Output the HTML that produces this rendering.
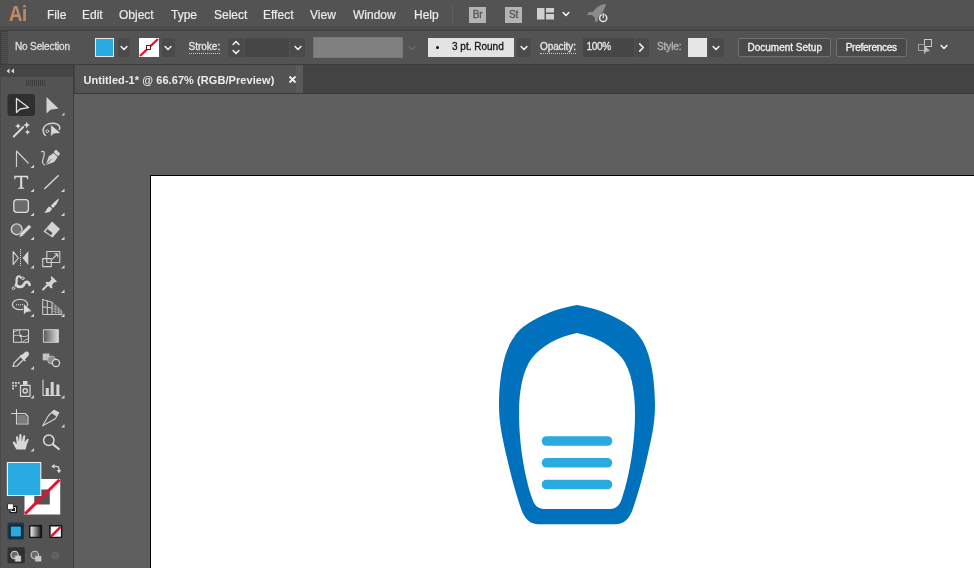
<!DOCTYPE html>
<html><head><meta charset="utf-8">
<style>
*{box-sizing:border-box;margin:0;padding:0}
html,body{width:974px;height:568px;overflow:hidden;background:#5f5f5f;font-family:"Liberation Sans",sans-serif;}
#root{will-change:transform;position:relative;width:974px;height:568px;overflow:hidden;background:#5f5f5f}
.abs{position:absolute}
#menubar{left:0;top:0;width:974px;height:30px;background:#535353}
#menubar span{position:absolute;top:7px;font-size:12px;color:#ececec;-webkit-text-stroke:0.2px currentColor;line-height:16px;white-space:nowrap}
#ctrl{left:0;top:30px;width:974px;height:35px;background:#535353;border-top:1px solid #3f3f3f;border-bottom:1px solid #3c3c3c}
#ctrl .t{position:absolute;font-size:11px;color:#dcdcdc;line-height:14px;white-space:nowrap;top:9px;letter-spacing:-0.3px}
.dd{position:absolute;background:#4a4a4a;border-radius:2px}
#tabbar{left:74px;top:65px;width:900px;height:29px;background:#434343;border-bottom:1px solid #3a3a3a}
#tab{left:75px;top:65px;width:228px;height:28px;background:linear-gradient(to right,#535353 0,#535353 221px,#5a5a5a 221px,#5a5a5a 228px)}
#tab span{position:absolute;left:8.4px;top:8px;letter-spacing:0.07px;font-size:11px;font-weight:bold;color:#ececec;white-space:nowrap;line-height:14px}
#tools{left:0;top:65px;width:74px;height:503px;background:#535353;border-right:1px solid #3c3c3c;border-left:1px solid #494949}
#toolhdr{left:0;top:65px;width:73px;height:12px;background:#454545}
#paste{left:75px;top:94px;width:899px;height:474px;background:#5f5f5f}
#art{left:150px;top:175px;width:830px;height:400px;background:#fff;border:1px solid #000}
.t10{font-size:10px;line-height:12px;white-space:nowrap;-webkit-text-stroke:0.3px currentColor}
.btn{background:#4a4a4a;border:1px solid #707070;border-radius:2px}
.btn span{position:absolute;top:2.5px;font-size:10px;line-height:12px;color:#f2f2f2;white-space:nowrap;-webkit-text-stroke:0.3px currentColor}
.ib{width:17px;height:16px;background:#b4b4b4;color:#555;font-size:10px;font-weight:normal;-webkit-text-stroke:0.3px #555;line-height:16px;text-align:center;letter-spacing:-0.3px}
</style></head><body><div id="root">
<div class="abs" id="paste"></div>
<div class="abs" id="art"></div>
<svg class="abs" style="left:480px;top:290px" width="200" height="250" viewBox="480 290 200 250">
<path d="M577 305 C605 309.500 633 324 640.200 337.500 C651 352 655 380 655 405 C655 425 651 440 647 458 C642 480 637 497 632.500 510 C629 519 624 524.300 615 524.300 L539 524.300 C530 524.300 525 519 521.500 510 C517 497 512 480 507 458 C503 440 499 425 499 405 C499 380 503 352 513.800 337.500 C521 324 549 309.500 577 305 Z" fill="#0071bc"/>
<path d="M577 333 C596 337 612 345.500 622 358 C631 370 635 390 635 413 C635 445 629 478 622 498 C620 505 616 509 610 509 L544 509 C538 509 534 505 532 498 C525 478 519 445 519 413 C519 390 523 370 532 358 C542 345.500 558 337 577 333 Z" fill="#fff"/>
<g stroke="#29abe2" stroke-width="9.6" stroke-linecap="round"><line x1="546.5" y1="441" x2="607.5" y2="441"/><line x1="546.5" y1="462.8" x2="607.5" y2="462.8"/><line x1="546.5" y1="484.5" x2="607.5" y2="484.5"/></g>
</svg>
<div class="abs" id="menubar">
<span style="left:8.5px;top:1.5px;font-size:22px;line-height:24px;color:#bd8a66;font-weight:bold;letter-spacing:-0.5px;display:inline-block;transform:scaleX(0.84);transform-origin:0 0">Ai</span>
<span style="left:47px">File</span><span style="left:82px">Edit</span><span style="left:119px">Object</span><span style="left:171px">Type</span><span style="left:214px">Select</span><span style="left:263px">Effect</span><span style="left:310px">View</span><span style="left:353px">Window</span><span style="left:414px">Help</span>
</div>
<div class="abs" id="ctrl"></div>
<div class="abs" style="left:0;top:31px;width:8px;height:33px;background:repeating-linear-gradient(to bottom,#414141 0,#414141 1px,#525252 1px,#525252 2px)"></div><div class="abs" style="left:0;top:31px;width:1px;height:33px;background:#3c3c3c"></div>
<div class="abs t10" style="left:15px;top:41px;letter-spacing:-0.15px;color:#dedede">No Selection</div>
<div class="abs" style="left:95px;top:38px;width:19px;height:19px;background:#29abe2;border:1px solid #e8e8e8"></div>
<div class="dd" style="left:118px;top:38px;width:12px;height:19px"></div><svg class="abs" style="left:118px;top:41.5px" width="12" height="12" viewBox="-6 -6 12 12"><path d="M-2.9 -1.5 L0 1.5 L2.9 -1.5" fill="none" stroke="#f0f0f0" stroke-width="1.6" stroke-linecap="round" stroke-linejoin="round"/></svg>
<svg class="abs" style="left:139px;top:38px" width="20" height="19" viewBox="0 0 20 19"><rect x="0" y="0" width="20" height="19" fill="#fff"/><line x1="1" y1="18" x2="19" y2="1" stroke="#e8112d" stroke-width="2.4"/><rect x="7.5" y="7.5" width="4" height="4" fill="#fff" stroke="#7a1010" stroke-width="1"/></svg>
<div class="dd" style="left:162px;top:38px;width:13px;height:19px"></div><svg class="abs" style="left:162px;top:41.5px" width="12" height="12" viewBox="-6 -6 12 12"><path d="M-2.9 -1.5 L0 1.5 L2.9 -1.5" fill="none" stroke="#f0f0f0" stroke-width="1.6" stroke-linecap="round" stroke-linejoin="round"/></svg>
<div class="abs t10" style="left:188.5px;top:41px;color:#e8e8e8;border-bottom:1px dotted #cfcfcf;height:13px">Stroke:</div>
<div class="dd" style="left:228px;top:38px;width:16px;height:19px"></div><svg class="abs" style="left:229.7px;top:37px" width="12" height="12" viewBox="-6 -6 12 12"><path d="M-2.9 1.5 L0 -1.5 L2.9 1.5" fill="none" stroke="#f0f0f0" stroke-width="1.6" stroke-linecap="round" stroke-linejoin="round"/></svg><svg class="abs" style="left:229.7px;top:46px" width="12" height="12" viewBox="-6 -6 12 12"><path d="M-2.9 -1.5 L0 1.5 L2.9 -1.5" fill="none" stroke="#f0f0f0" stroke-width="1.6" stroke-linecap="round" stroke-linejoin="round"/></svg>
<div class="abs" style="left:245px;top:38px;width:44px;height:19px;background:#464646"></div>
<div class="dd" style="left:290px;top:38px;width:15px;height:19px"></div><svg class="abs" style="left:291.5px;top:41.5px" width="12" height="12" viewBox="-6 -6 12 12"><path d="M-2.9 -1.5 L0 1.5 L2.9 -1.5" fill="none" stroke="#f0f0f0" stroke-width="1.6" stroke-linecap="round" stroke-linejoin="round"/></svg>
<div class="abs" style="left:313px;top:37px;width:90px;height:21px;background:#808080;border:1px solid #767676"></div>
<svg class="abs" style="left:405.7px;top:41.5px" width="12" height="12" viewBox="-6 -6 12 12"><path d="M-2.9 -1.5 L0 1.5 L2.9 -1.5" fill="none" stroke="#6a6a6a" stroke-width="1.6" stroke-linecap="round" stroke-linejoin="round"/></svg>
<div class="abs" style="left:428px;top:38px;width:86px;height:19px;background:#e3e3e3"></div>
<div class="abs" style="left:436px;top:45.5px;width:3px;height:3px;border-radius:50%;background:#111"></div>
<div class="abs t10" style="left:452px;top:41px;color:#151515">3 pt. Round</div>
<div class="dd" style="left:517px;top:38px;width:14px;height:19px"></div><svg class="abs" style="left:517.5px;top:41.5px" width="12" height="12" viewBox="-6 -6 12 12"><path d="M-2.9 -1.5 L0 1.5 L2.9 -1.5" fill="none" stroke="#f0f0f0" stroke-width="1.6" stroke-linecap="round" stroke-linejoin="round"/></svg>
<div class="abs t10" style="left:540px;top:41px;color:#e8e8e8;border-bottom:1px dotted #cfcfcf;height:13px;letter-spacing:-0.1px">Opacity:</div>
<div class="abs" style="left:583px;top:38px;width:51px;height:19px;background:#464646"></div>
<div class="abs t10" style="left:586.5px;top:41px;color:#e8e8e8;letter-spacing:-0.3px">100%</div>
<div class="dd" style="left:635px;top:38px;width:14px;height:19px"></div>
<svg class="abs" style="left:635px;top:41px" width="13" height="13" viewBox="-6.5 -6.5 13 13"><path d="M-1.8 -3.6 L1.8 0 L-1.8 3.6" fill="none" stroke="#f0f0f0" stroke-width="1.6" stroke-linecap="round" stroke-linejoin="round"/></svg>
<div class="abs t10" style="left:657px;top:41px;color:#b8b8b8;letter-spacing:-0.1px">Style:</div>
<div class="abs" style="left:688px;top:38px;width:19px;height:19px;background:#e6e6e6"></div>
<div class="dd" style="left:709px;top:38px;width:15px;height:19px"></div><svg class="abs" style="left:710.3px;top:41.5px" width="12" height="12" viewBox="-6 -6 12 12"><path d="M-2.9 -1.5 L0 1.5 L2.9 -1.5" fill="none" stroke="#f0f0f0" stroke-width="1.6" stroke-linecap="round" stroke-linejoin="round"/></svg>
<div class="abs btn" style="left:738px;top:38px;width:93px;height:19px"><span style="left:8.5px">Document Setup</span></div>
<div class="abs btn" style="left:836px;top:38px;width:71px;height:19px"><span style="left:8.7px;letter-spacing:-0.25px">Preferences</span></div>
<svg class="abs" style="left:916px;top:38px" width="20" height="17" viewBox="0 0 20 17"><rect x="8.5" y="1.5" width="7" height="7" fill="none" stroke="#c8c8c8" stroke-width="1"/><rect x="2.5" y="6.5" width="6" height="6" fill="none" stroke="#a0a0a0" stroke-width="1"/><path d="M8 7 L8 16 L10.5 13.5 L14 13 Z" fill="#bdbdbd"/></svg>
<svg class="abs" style="left:937.6px;top:40.5px" width="12" height="12" viewBox="-6 -6 12 12"><path d="M-2.9 -1.5 L0 1.5 L2.9 -1.5" fill="none" stroke="#f0f0f0" stroke-width="1.6" stroke-linecap="round" stroke-linejoin="round"/></svg>
<div class="abs" style="left:0;top:26px;width:974px;height:4px;background:#4b4b4b"></div>
<div class="abs" style="left:452px;top:4px;width:1px;height:20px;background:#5f5f5f"></div>
<div class="abs ib" style="left:469px;top:7px">Br</div>
<div class="abs ib" style="left:505px;top:7px">St</div>
<svg class="abs" style="left:537px;top:8px" width="17" height="12" viewBox="0 0 17 12"><rect x="0" y="0" width="7.5" height="11.5" fill="#cfcfcf"/><rect x="9" y="0" width="8" height="4.5" fill="#cfcfcf"/><rect x="9" y="6" width="8" height="5.5" fill="#cfcfcf"/></svg>
<svg class="abs" style="left:560.3px;top:8px" width="12" height="12" viewBox="-6 -6 12 12"><path d="M-2.9 -1.5 L0 1.5 L2.9 -1.5" fill="none" stroke="#f0f0f0" stroke-width="1.6" stroke-linecap="round" stroke-linejoin="round"/></svg>
<svg class="abs" style="left:586px;top:3px" width="24" height="21" viewBox="0 0 24 21"><path d="M20 1 C15 1 10 4 7 9 L3 9 L1 12 L6 12 L9 15 L9 19 L12 18 L12 14 C16 11 19 6 20 1 Z" fill="#8a8a8a"/><circle cx="17.2" cy="15" r="3.6" fill="#535353" stroke="#e8e8e8" stroke-width="1.5"/><rect x="16.2" y="9.5" width="2" height="6" fill="#e8e8e8" stroke="#535353" stroke-width="0.8"/></svg>
<div class="abs" id="tabbar"></div>
<div class="abs" id="tab"><span>Untitled-1* @ 66.67% (RGB/Preview)</span><svg class="abs" style="left:213px;top:10px" width="9" height="9" viewBox="0 0 9 9"><path d="M1.500 1.500 L7.500 7.500 M7.500 1.500 L1.500 7.500" stroke="#f0f0f0" stroke-width="1.800" stroke-linecap="butt"/></svg></div>
<div class="abs" id="tools"></div>
<div class="abs" id="toolhdr"></div>
<!--TOOLS-->
<svg class="abs" id="toolsvg" style="left:0;top:64px" width="73" height="504" viewBox="0 64 73 504" fill="none" stroke-linecap="round" stroke-linejoin="round">
<!-- header chevrons -->
<path d="M9.5 68.5 L6.5 71 L9.5 73.5 Z M14 68.5 L11 71 L14 73.5 Z" fill="#d8d8d8" stroke="none"/>
<!-- grip -->
<g stroke="#3c3c3c" stroke-width="1" stroke-linecap="butt"><path d="M26.5 80V86M28.5 80V86M30.5 80V86M32.5 80V86M34.5 80V86M36.5 80V86M38.5 80V86M40.5 80V86M42.5 80V86M44.5 80V86"/></g>
<!-- selected bg -->
<rect x="7.5" y="94" width="27.5" height="22" rx="3" fill="#2f2f2f"/>
<!-- selection tool -->
<path d="M16.5 98.5 L16.5 112.5 L20.2 109 L28.5 107.6 Z" stroke="#e0e0e0" stroke-width="1.3" fill="none"/>
<!-- direct selection -->
<path d="M46.5 97 L46.5 113.5 L50.5 109.8 L58.5 108.6 Z" fill="#d2d2d2"/>
<!-- corner triangles -->
<g fill="#d0d0d0" stroke="none" id="tri">
<path d="M64.5 112.5V115.5H61.5Z"/>
<path d="M64.5 135.5V138.5H61.5Z" opacity="0"/>
<path d="M34 164.5V168H30.5Z"/>
<path d="M34 188.5V192H30.5Z"/><path d="M64.5 188.5V192H61Z"/>
<path d="M34 212.5V216H30.5Z"/><path d="M64.5 212.5V216H61Z"/>
<path d="M34 236.5V240H30.5Z"/><path d="M64.5 236.5V240H61Z"/>
<path d="M34 265V268.5H30.5Z"/><path d="M64.5 265V268.5H61Z"/>
<path d="M34 289.5V293H30.5Z"/><path d="M64.5 289.5V293H61Z"/>
<path d="M34 313.5V317H30.5Z"/><path d="M64.5 313.5V317H61Z"/>
<path d="M34 366V369.5H30.5Z"/>
<path d="M34 395V398.5H30.5Z"/><path d="M64.5 395V398.5H61Z"/>
<path d="M64.5 424V427.5H61Z"/>
<path d="M34 448V451.5H30.5Z"/>
</g>
<!-- magic wand -->
<path d="M13.8 136.5 L23.2 127" stroke="#d8d8d8" stroke-width="2"/>
<g fill="#e0e0e0" stroke="none"><path d="M18 123.200l.9 2 2 .9-2 .9-.9 2-.9-2-2-.9 2-.9z"/><path d="M26.700 121.800l1 2.300 2.300 1-2.300 1-1 2.300-1-2.300-2.300-1 2.300-1z"/><path d="M27.500 129.500l.8 1.800 1.800.8-1.800.8-.8 1.800-.8-1.800-1.800-.8 1.800-.8z"/></g>
<!-- lasso w arrow -->
<path d="M45.500 135.500 C42.300 133 42.300 127.500 46 125 C50 122.300 57 122.500 59.300 126 C60 127.300 59.800 128.500 59.300 129.500" stroke="#d0d0d0" stroke-width="1.500"/>
<circle cx="47.300" cy="131.200" r="1.400" stroke="#d0d0d0" stroke-width="1"/>
<path d="M50.800 124.800 L50.800 136.500 L53.800 133.800 L60.500 133 Z" fill="#d8d8d8" stroke="#535353" stroke-width="0.500"/>
<!-- anchor point tool -->
<path d="M16.500 166.500 V151 L28.200 163" stroke="#d0d0d0" stroke-width="1.200"/>
<!-- curvature pen -->
<g transform="translate(-1.800 -0.600)">
<path d="M43.200 152.400 C46 150.800 46.800 153.500 45.500 157.500 C44 161.500 43.500 165 46.500 165.500" stroke="#d0d0d0" stroke-width="1.200"/>
<path d="M47.500 165.500 L50.500 157 L55.500 153.500 L59.500 157.500 L56 162.500 Z" fill="#d4d4d4"/>
<path d="M55.500 152.500 L57.800 150.200 L62 154.400 L59.800 156.800 Z" fill="#d4d4d4"/>
<path d="M47.800 165.200 L53 160" stroke="#535353" stroke-width="0.900"/>
</g>
<!-- T -->
<path d="M14.300 175.800h13.800v3.400h-1l-.5-1.900h-4.400v10.100l1.900.4v1h-5.800v-1l1.900-.4v-10.100h-4.400l-.5 1.900h-1z" fill="#dedede"/>
<!-- line -->
<path d="M44.800 188.500 L58.200 175.800" stroke="#d4d4d4" stroke-width="1.500"/>
<!-- rounded rect -->
<rect x="13.800" y="199.700" width="14.600" height="12.600" rx="3" fill="#6a6a6a" stroke="#dcdcdc" stroke-width="1.300"/>
<!-- brush -->
<path d="M59 198.500 C57 199.500 52.500 203.500 50.800 206 L52.800 208 C55.500 206 58.500 201.500 59 198.500 Z" fill="#d8d8d8"/>
<path d="M50 206.800 L52 208.800 C51.500 211 49 213 44 213 C46 211.500 46.500 209.500 47.500 208 C48.200 207 49.200 206.600 50 206.800 Z" fill="#d8d8d8"/>
<!-- shaper -->
<circle cx="16.700" cy="229.300" r="5.400" stroke="#d0d0d0" stroke-width="1.400" fill="#707070"/>
<path d="M19 237.500 L20 233.500 L29 224.500 L31.500 227 L22.500 236 Z" fill="#dadada" stroke="#535353" stroke-width="0.600"/>
<!-- eraser -->
<path d="M52 221.500 L60 229 L52.500 237.500 L43.500 231.500 Z" fill="#d4d4d4"/>
<path d="M45.500 231.300 L47.500 229 L52.500 233 L50.800 235.200 Z" fill="#505050"/>
<!-- reflect -->
<path d="M13.200 251.500 L18.300 258 L13.200 264.500 Z" stroke="#d4d4d4" stroke-width="1.200"/>
<path d="M28.300 251 L22.500 258 L28.300 265 Z" fill="#d4d4d4"/>
<path d="M20.500 249 V267" stroke="#e0e0e0" stroke-width="1" stroke-dasharray="1 1" stroke-linecap="butt"/>
<!-- scale -->
<rect x="46.800" y="251.500" width="13" height="11" stroke="#d0d0d0" stroke-width="1.100"/>
<rect x="42.700" y="258.600" width="8.600" height="8" stroke="#d0d0d0" stroke-width="1.100"/>
<path d="M52.500 259 L57.500 254 M54.500 253.800 H57.700 V257" stroke="#d0d0d0" stroke-width="1.100"/>
<!-- warp -->
<path d="M15.800 285.500 C17.500 283 15.800 280 17 277.600 C18 275.600 20.200 276 20.800 277.600" stroke="#d8d8d8" stroke-width="2.200"/>
<path d="M16 284.800 C18 287.800 22.500 287.500 24 284.300 C25.300 281.300 28.300 280.500 29.600 284.800" stroke="#d8d8d8" stroke-width="2.800"/>
<circle cx="13.400" cy="288.300" r="1.300" stroke="#e0e0e0" stroke-width="0.900" fill="#535353"/>
<circle cx="22.800" cy="278.300" r="1.300" stroke="#e0e0e0" stroke-width="0.900" fill="#535353"/>
<!-- pin -->
<path d="M51.500 276 L57 281.500 L55.500 282.500 L54.500 282 L52 285 L52.500 287.500 L51 288.500 L45.500 283 L46.500 281.800 L49 282.200 L51.500 279.200 L50.800 277.500 Z" fill="#d4d4d4"/>
<path d="M47.500 285 L43 289.500" stroke="#d4d4d4" stroke-width="1.900"/>
<!-- shape builder -->
<ellipse cx="20" cy="304.500" rx="7.600" ry="5.200" stroke="#d0d0d0" stroke-width="1.300"/>
<path d="M16 304.800 H23" stroke="#e8e8e8" stroke-width="1.100" stroke-dasharray="1 1" stroke-linecap="butt"/>
<path d="M23.500 303.500 L23.500 315 L26.500 312.300 L32 311.500 Z" fill="#dadada" stroke="#535353" stroke-width="0.700"/>
<!-- perspective grid -->
<path d="M42.700 299.500 V314.500 H62 M47.300 300.800 V314.500 M52 302.300 V314.500 M42.700 299.500 L52 302.300 M42.700 306.800 L52 308" stroke="#d0d0d0" stroke-width="1"/>
<path d="M52 302.300 L62 311 M52 305.200 L62 311.800 M52 308 L62 312.700 M52 311 L62 313.600 M55.300 305.200 V314.500 M58.600 308 V314.500" stroke="#b0b0b0" stroke-width="0.800"/>
<!-- mesh -->
<rect x="13.500" y="329.700" width="15" height="12.600" stroke="#d4d4d4" stroke-width="1.100"/>
<path d="M13.500 336 C18 333 22 339 28.500 335.500 M20 329.700 C17 334 24 338 21 342.300 M13.500 332 C17 331 18 330.500 19 329.700 M23 342 C24.500 340 26.500 339 28.500 339" stroke="#d0d0d0" stroke-width="0.900"/>
<circle cx="20.700" cy="335.800" r="1.100" fill="#e0e0e0"/>
<!-- gradient -->
<defs><linearGradient id="gr" x1="0" x2="1" y1="0" y2="0"><stop offset="0" stop-color="#5a5a5a"/><stop offset="1" stop-color="#dcdcdc"/></linearGradient>
<linearGradient id="gr2" x1="0" x2="1" y1="0" y2="0"><stop offset="0" stop-color="#fff"/><stop offset="1" stop-color="#111"/></linearGradient></defs>
<rect x="43.800" y="329.700" width="14.600" height="12.600" fill="url(#gr)" stroke="#cfcfcf" stroke-width="1"/>
<!-- eyedropper -->
<path d="M13 366.500 L14 363 L22 355 L25 358 L17 366 Z" stroke="#d4d4d4" stroke-width="1.200" fill="#535353"/>
<path d="M21.500 355.500 L24.800 352.200 C26 351 28 351.500 28.600 352.600 C29.400 354 29 355.200 28 356.200 L24.800 359.400 L26 360.600 L25 361.600 L19.500 356.200 L20.500 355.200 Z" fill="#d8d8d8"/>
<!-- blend -->
<rect x="42.700" y="353.500" width="6.800" height="6.800" fill="#c4c4c4"/>
<circle cx="51.500" cy="360" r="3.900" fill="#8c8c8c" stroke="#c0c0c0" stroke-width="0.800"/>
<circle cx="56" cy="363" r="3.600" fill="#535353" stroke="#dcdcdc" stroke-width="1.200"/>
<!-- symbol sprayer -->
<g fill="#d8d8d8" stroke="none"><rect x="12.200" y="382" width="1.800" height="1.800"/><rect x="15" y="382" width="1.800" height="1.800"/><rect x="17.800" y="382" width="1.800" height="1.800"/><rect x="12.200" y="384.800" width="1.800" height="1.800"/><rect x="15" y="384.800" width="1.800" height="1.800"/><rect x="12.200" y="387.600" width="1.800" height="1.800"/></g>
<rect x="20.500" y="385.300" width="9.500" height="11" stroke="#d8d8d8" stroke-width="1.200"/>
<rect x="23" y="381" width="4.500" height="3.800" fill="#d8d8d8"/>
<circle cx="25.200" cy="390.800" r="2.200" stroke="#d8d8d8" stroke-width="1.300"/>
<!-- graph -->
<path d="M43 380 V395.500 H60.500" stroke="#d4d4d4" stroke-width="1.100"/>
<rect x="45.800" y="388" width="3" height="7" fill="#d4d4d4"/><rect x="50.700" y="382" width="3" height="13" fill="#d4d4d4"/><rect x="56.400" y="384.500" width="3" height="10.500" fill="#d4d4d4"/>
<!-- artboard -->
<path d="M16.500 409.500 V424 H28 V416.500 L25 413.500 H11.500" stroke="#d4d4d4" stroke-width="1.100"/>
<path d="M17.500 415 H24.500 L27 417.500 V423 H17.500 Z" fill="#7c7c7c"/>
<!-- slice -->
<path d="M42.700 425.800 L48.500 415.500 L54 410.300 L58.800 412.800 L55.300 418.800 Z" stroke="#d4d4d4" stroke-width="1.100" fill="#535353"/>
<path d="M54 410.300 L58.800 412.800 L56.600 416.600 L51.300 413 Z" fill="#d4d4d4"/>
<!-- hand -->
<path d="M16.500 449.500 C15 447 13.500 444.500 12.800 443 C12.300 441.800 13.800 441 14.800 442 L16.800 444.200 L16 437.500 C15.900 436 17.900 435.800 18.100 437.200 L19 441.500 L19.300 435.200 C19.400 433.700 21.500 433.700 21.500 435.200 L21.700 441.500 L23.200 436 C23.600 434.600 25.500 435 25.300 436.500 L24.500 442.500 L26.800 439.200 C27.600 438 29.300 439 28.600 440.300 C27.500 442.500 26.500 445.500 25.500 449.500 Z" fill="#d8d8d8"/>
<!-- zoom -->
<circle cx="48.800" cy="440.300" r="5.200" stroke="#d8d8d8" stroke-width="1.500"/>
<path d="M53 444.300 L58.800 449" stroke="#d8d8d8" stroke-width="2.200"/>
<!-- stroke box -->
<path d="M24.500 479 H60.200 V514.400 H24.500 Z M34.300 489.500 V504.400 H49.800 V489.500 Z" fill="#fff" fill-rule="evenodd" stroke="none"/>
<path d="M25.200 513.700 L59.500 479.700" stroke="#e8112d" stroke-width="3" stroke-linecap="butt"/>
<!-- fill box -->
<rect x="7.400" y="462.500" width="33.400" height="33" fill="#29abe2" stroke="#f4f4f4" stroke-width="1.100"/>
<!-- swap -->
<path d="M54.500 466.300 H56.300 C58.200 466.300 59 467.300 59 469 V470.500" stroke="#d8d8d8" stroke-width="1.300" stroke-linecap="butt"/><path d="M51.200 466.300 L54.600 463.900 V468.700 Z M59 473.300 L56.600 470 H61.400 Z" fill="#d8d8d8" stroke="none"/>
<!-- default -->
<rect x="10.300" y="506.300" width="6.400" height="6.400" fill="#111" stroke="#111" stroke-width="0.600"/>
<rect x="11.500" y="507.500" width="4" height="4" fill="none" stroke="#f0f0f0" stroke-width="1"/>
<rect x="7.800" y="503.800" width="5.600" height="5.600" fill="#fff" stroke="#1a1a1a" stroke-width="0.700"/>
<!-- mode buttons -->
<rect x="7.500" y="522.500" width="16.500" height="17" rx="1.500" fill="#1f3646"/>
<rect x="10.100" y="525.800" width="11.400" height="11.400" fill="#29abe2" stroke="#0a1a24" stroke-width="1.200"/>
<rect x="29.800" y="525.800" width="11.600" height="11.600" fill="url(#gr2)" stroke="#111" stroke-width="1.400"/>
<rect x="50" y="525.800" width="11.600" height="11.600" fill="#fff" stroke="#111" stroke-width="1.400"/>
<path d="M51 536.600 L60.600 526.800" stroke="#e8112d" stroke-width="2.600" stroke-linecap="butt"/>
<!-- draw modes -->
<rect x="7.500" y="547.300" width="17.300" height="16" rx="1.500" fill="#303030"/>
<circle cx="14.600" cy="555" r="3.700" stroke="#d8d8d8" stroke-width="1.100" fill="#6a6a6a"/>
<rect x="15.500" y="556" width="5.200" height="5.200" fill="#d0d0d0" stroke="#e0e0e0" stroke-width="0.600"/>
<circle cx="34.800" cy="555" r="3.700" stroke="#c8c8c8" stroke-width="1.100" fill="#6a6a6a"/>
<rect x="35.800" y="556.300" width="5.200" height="4.800" fill="#c8c8c8" stroke="#d8d8d8" stroke-width="0.600"/>
<circle cx="55.200" cy="555.500" r="3.600" fill="#606060" stroke="#6a6a6a" stroke-width="0.800"/>
</svg>
<!--/TOOLS-->
</div></body></html>
